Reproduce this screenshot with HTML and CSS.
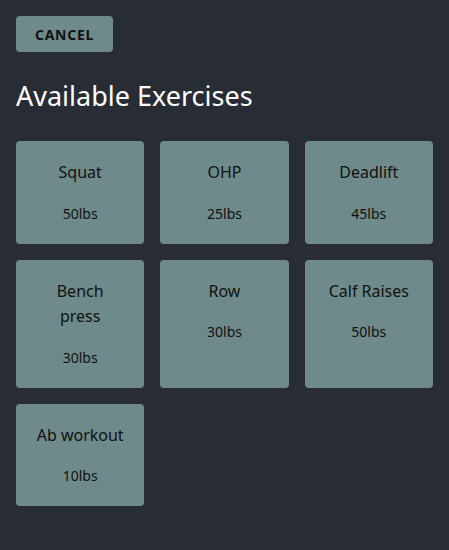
FILE: index.html
```html
<!DOCTYPE html>
<html>
<head>
<meta charset="utf-8">
<link rel="stylesheet" href="styles.css">
</head>
<body>
<div class="app">
  <button class="cancel">CANCEL</button>
  <h1 class="title">Available Exercises</h1>
  <div class="grid">
    <div class="card"><div class="name">Squat</div><div class="weight">50lbs</div></div>
    <div class="card"><div class="name">OHP</div><div class="weight">25lbs</div></div>
    <div class="card"><div class="name">Deadlift</div><div class="weight">45lbs</div></div>
    <div class="card"><div class="name">Bench press</div><div class="weight">30lbs</div></div>
    <div class="card"><div class="name">Row</div><div class="weight">30lbs</div></div>
    <div class="card"><div class="name">Calf Raises</div><div class="weight">50lbs</div></div>
    <div class="card"><div class="name">Ab workout</div><div class="weight">10lbs</div></div>
  </div>
</div>
</body>
</html>
```
FILE: styles.css
```css
html, body {
  margin: 0;
  padding: 0;
  background: #282c34;
  height: 100%;
}
body {
  font-family: "Noto Sans", "Open Sans", sans-serif;
}
.app {
  padding: 16px;
}
.cancel {
  display: block;
  width: 97px;
  height: 36px;
  border: none;
  border-radius: 4px;
  background: #6f8a8a;
  color: #111;
  font-family: "Noto Sans", sans-serif;
  font-weight: 700;
  font-size: 14px;
  letter-spacing: 0.7px;
  padding: 0;
}
.title {
  margin: 26px 0 27px;
  color: #fff;
  font-weight: 400;
  font-size: 27px;
  line-height: 36px;
}
.grid {
  display: grid;
  grid-template-columns: repeat(3, 1fr);
  gap: 16px;
}
.card {
  background: #6f8a8a;
  border-radius: 4px;
  padding: 19px 19.5px 19px;
  text-align: center;
  color: #111;
  display: flex;
  flex-direction: column;
  gap: 17px;
}
.name {
  font-size: 16px;
  line-height: 25.5px;
}
.weight {
  font-size: 14px;
  line-height: 22px;
}
```
